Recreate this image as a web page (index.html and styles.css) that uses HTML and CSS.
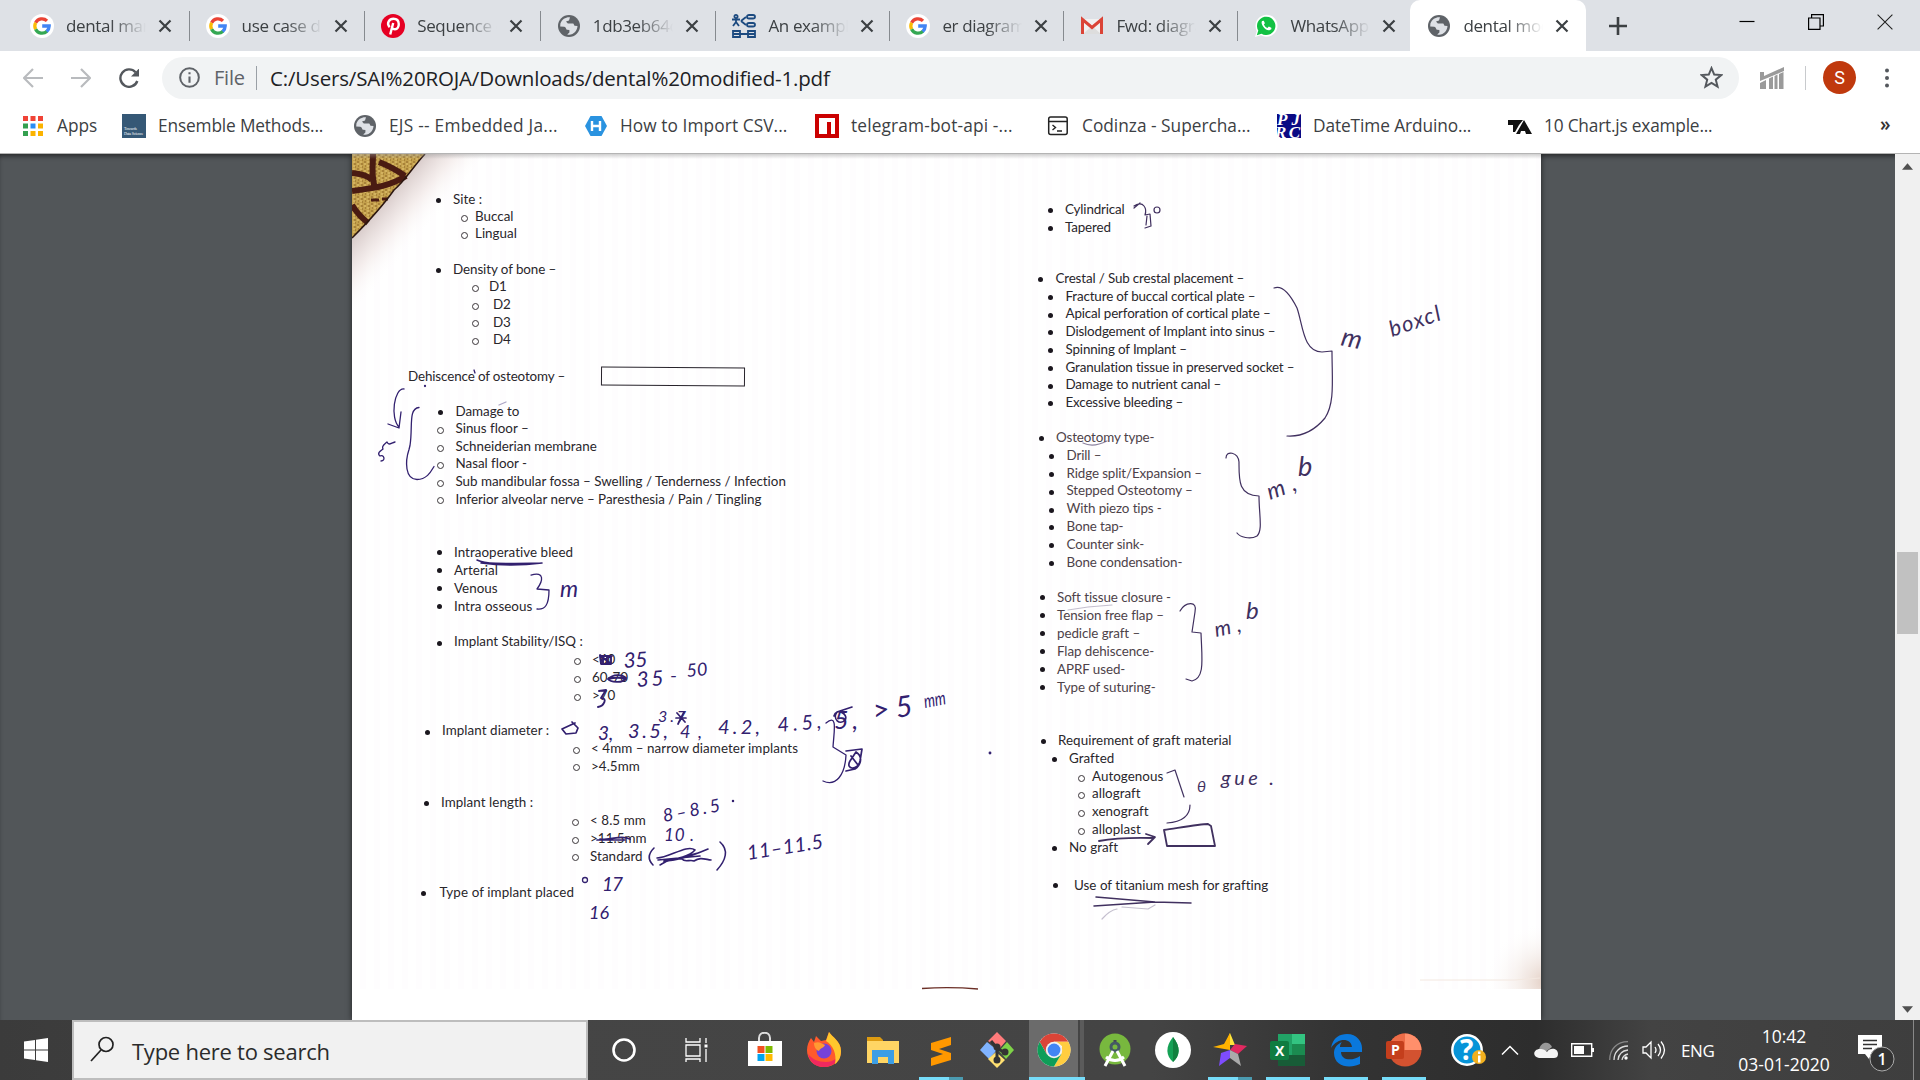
FILE: index.html
```html
<!DOCTYPE html>
<html lang="en">
<head>
<meta charset="utf-8">
<title>dental modified-1.pdf</title>
<link rel="stylesheet" href="styles.css">
</head>
<body>
<svg class="defs" width="0" height="0">
  <symbol id="google" viewBox="0 0 24 24"><circle cx="12" cy="12" r="12" fill="#fff"/><g fill="none" stroke-width="3.3"><path d="M5.6 8.8A7.2 7.2 0 0 1 17 6.9" stroke="#ea4335"/><path d="M5.6 15.2a7.2 7.2 0 0 1 0-6.4" stroke="#fbbc05"/><path d="M17 17.2A7.2 7.2 0 0 1 5.6 15.2" stroke="#34a853"/><path d="M12.2 12h7a7.2 7.2 0 0 1-2.5 5.4" stroke="#4285f4"/></g></symbol>
  <symbol id="globe" viewBox="0 0 24 24"><circle cx="12" cy="12" r="11" fill="#5f6368"/><path d="M13 3.2C9 2.8 5 5 3.4 9.5l-.2 3 4 .2c2 .2 1.6 3 3 3l2.2.2v2.6l-2.2 2c6 1.2 10-3.5 10.300-8.500l-3-.2-1.200-2.400h-5.500L9 7.500l3-1z" fill="#dee1e6"/></symbol>
  <symbol id="x" viewBox="0 0 14 14"><path d="M1.500 1.500l11 11m0-11l-11 11" stroke="#3c4043" stroke-width="2.200"/></symbol>
</svg>

<header class="tabs">
  <div class="tab"><svg class="fav"><use href="#google"/></svg><span class="title">dental man</span><svg class="close"><use href="#x"/></svg></div>
  <div class="tab"><svg class="fav"><use href="#google"/></svg><span class="title">use case dia</span><svg class="close"><use href="#x"/></svg></div>
  <div class="tab"><svg class="fav" viewBox="0 0 24 24"><circle cx="12" cy="12" r="12" fill="#e60023"/><path d="M9.200 20.500l3-11.500M8.600 13.200C5 9 8.500 4.800 12.500 4.800c7 0 6.500 10.500 1.500 10.500-2 0-2.700-1.300-2.700-1.300" fill="none" stroke="#fff" stroke-width="2.400"/></svg><span class="title">Sequence d</span><svg class="close"><use href="#x"/></svg></div>
  <div class="tab"><svg class="fav"><use href="#globe"/></svg><span class="title">1db3eb64c</span><svg class="close"><use href="#x"/></svg></div>
  <div class="tab"><svg class="fav" viewBox="0 0 24 24"><g fill="none" stroke="#1c4a80" stroke-width="1.800"><circle cx="4" cy="2.500" r="1.600"/><path d="M4 4v4M0 5.500h8M4 8l-3 4M4 8l3 4M9 7l5-4M9 7l5 4M8 20h8"/><rect x="15" y="1" width="8" height="3.500" rx="2"/><rect x="15" y="9" width="8" height="3.500" rx="2"/><path d="M1 17h7v6H1zM1 20h7M16 17h7v6h-7zM16 20h7"/></g></svg><span class="title">An example</span><svg class="close"><use href="#x"/></svg></div>
  <div class="tab"><svg class="fav"><use href="#google"/></svg><span class="title">er diagram</span><svg class="close"><use href="#x"/></svg></div>
  <div class="tab"><svg class="fav" viewBox="0 0 24 24"><path d="M3 5h18v15H3z" fill="#f1f1f1"/><path d="M3 20l9-8 9 8z" fill="#ddd"/><path d="M2.500 20V5.500L12 13.500l9.500-8V20" fill="none" stroke="#db4437" stroke-width="3"/></svg><span class="title">Fwd: diagra</span><svg class="close"><use href="#x"/></svg></div>
  <div class="tab nosep"><svg class="fav" viewBox="0 0 24 24"><path d="M1 23l1.800-6A11 11 0 1 1 7 21.300z" fill="#fff"/><path d="M2.800 21.200l1.500-4.600A9.200 9.200 0 1 1 7.500 19.800z" fill="#12c143"/><path d="M8 7c-2 3 3.500 10.500 8 9 1.500-.5 1.500-1.500 1.300-2.200l-2.500-1.200-1.300 1.400c-1.500-.5-3-2-3.600-3.500l1-1.300L9.800 6.800z" fill="#fff"/></svg><span class="title">WhatsApp</span><svg class="close"><use href="#x"/></svg></div>
  <div class="tab active"><svg class="fav"><use href="#globe"/></svg><span class="title">dental mod</span><svg class="close"><use href="#x"/></svg></div>
  <svg class="plus" viewBox="0 0 18 18"><path d="M9 0v18M0 9h18" stroke="#3c4043" stroke-width="2.600"/></svg>
  <div class="winbtns">
    <svg viewBox="0 0 16 16"><path d="M.5 7.500h15" stroke="#000" stroke-width="1.200"/></svg>
    <svg viewBox="0 0 16 16"><path d="M.6 4h11.400v11.400H.6zM3.600 4V.6h11.800V12H12" fill="none" stroke="#000" stroke-width="1.200"/></svg>
    <svg viewBox="0 0 16 16"><path d="M.6.6l14.800 14.800m0-14.800L.6 15.400" stroke="#222" stroke-width="1.100"/></svg>
  </div>
</header>

<nav class="toolbar">
  <svg class="nav" viewBox="0 0 20 20"><path d="M20 10H1M10 1L1 10l9 9" fill="none" stroke="#b9bbbe" stroke-width="2.200"/></svg>
  <svg class="nav" viewBox="0 0 20 20"><path d="M0 10h19M10 1l9 9-9 9" fill="none" stroke="#b9bbbe" stroke-width="2.200"/></svg>
  <svg class="nav" viewBox="0 0 20 20"><path d="M18.300 13A8.700 8.700 0 1 1 16.500 4.200" fill="none" stroke="#54585d" stroke-width="2.400"/><path d="M20.500 0v8.500H12z" fill="#54585d"/></svg>
  <div class="omni">
    <svg class="info" viewBox="0 0 20 20"><circle cx="10" cy="10" r="8.900" fill="none" stroke="#5f6368" stroke-width="1.900"/><path d="M9 9h2v6H9zM9 5h2v2H9z" fill="#5f6368"/></svg>
    <span class="file">File</span><span class="url">C:/Users/SAI%20ROJA/Downloads/dental%20modified-1.pdf</span>
    <svg class="star" viewBox="0 0 22 22"><path d="M11 2l2.600 6.200 6.700.5-5.200 4.400 1.700 6.600-5.800-3.600-5.800 3.600 1.700-6.600L1.700 8.700l6.700-.5z" fill="none" stroke="#54585d" stroke-width="1.900"/></svg>
  </div>
  <svg class="ext" viewBox="0 0 24 22"><path d="M0 5h4v4L24 0v4L0 14zM0 16l6-3v9H0zM9 11.500l4-2V22H9zM14.500 9l3-1.500V22h-3zM19 7l4.500-2v17H19z" fill="#9a9a9a"/></svg>
  <span class="vline"></span>
  <span class="avatar">S</span>
  <svg class="dots" viewBox="0 0 6 24"><g fill="#54585d"><circle cx="3" cy="3" r="2.400"/><circle cx="3" cy="12" r="2.400"/><circle cx="3" cy="21" r="2.400"/></g></svg>
</nav>

<nav class="bookmarks">
  <a class="bm b1"><svg viewBox="0 0 24 24"><g><path d="M2 2h5v5H2zM9.500 2h5v5h-5zM17 2h5v5h-5z" fill="#f04336"/><path d="M2 9.500h5v5H2zM2 17h5v5H2z" fill="#34a050"/><path d="M9.500 9.500h5v5h-5z" fill="#2a8df5"/><path d="M17 9.500h5v5h-5zM17 17h5v5h-5zM9.500 17h5v5h-5z" fill="#fbb300"/></g></svg><span>Apps</span></a>
  <a class="bm b2"><svg viewBox="0 0 24 24"><path d="M0 0h24v24H0z" fill="#355876"/><text x="2" y="16" font-size="4" font-family="Liberation Serif" fill="#fff">Towards</text><text x="2" y="21" font-size="4" font-family="Liberation Serif" fill="#fff">Data Science</text></svg><span>Ensemble Methods...</span></a>
  <a class="bm b3"><svg><use href="#globe"/></svg><span>EJS -- Embedded Ja...</span></a>
  <a class="bm b4"><svg viewBox="0 0 24 24"><path d="M6.500 2h11L23 12l-5.500 10h-11L1 12z" fill="#2a93e0"/><path d="M8 7v10M16 7v10M8 12h8" stroke="#fff" stroke-width="2.400"/></svg><span>How to Import CSV...</span></a>
  <a class="bm b5"><svg viewBox="0 0 24 24"><path d="M0 0h24v24H0z" fill="#cb0000"/><path d="M4 4h16v16h-4V8h-4v12H4z" fill="#fff"/></svg><span>telegram-bot-api -...</span></a>
  <a class="bm b6"><svg viewBox="0 0 24 24"><rect x="2.700" y="3" width="18.500" height="17.500" rx="2" fill="none" stroke="#222" stroke-width="1.500"/><path d="M3 7.500h18M6.500 11l3 2.500-3 2.500M11 17h5" fill="none" stroke="#222" stroke-width="1.400"/></svg><span>Codinza - Supercha...</span></a>
  <a class="bm b7"><svg viewBox="0 0 24 24"><path d="M0 0h24v24H0z" fill="#0a0a84"/><g fill="#fff" font-family="Liberation Serif" font-weight="bold" font-style="italic" font-size="17"><text x="0" y="11" textLength="23">PJ</text><text x="-2" y="23.500" textLength="25">RC</text></g></svg><span>DateTime Arduino...</span></a>
  <a class="bm b8"><svg viewBox="0 0 24 24"><path d="M0 6h15l-4 5-4 7H5v-7H0zM16 6l8 14h-6l-1-3h-4l-1 3H8z" fill="#111"/></svg><span>10 Chart.js example...</span></a>
  <b class="more">»</b>
</nav>

<main class="viewer">
  <article class="page">
    <svg class="art" viewBox="352 154 1189 835">
      <defs>
        <linearGradient id="fold" gradientUnits="userSpaceOnUse" x1="388" y1="194" x2="428" y2="228"><stop offset="0" stop-color="#c9b8b6" stop-opacity=".75"/><stop offset=".5" stop-color="#efe4e2" stop-opacity=".6"/><stop offset="1" stop-color="#fff" stop-opacity="0"/></linearGradient>
        <radialGradient id="stain" gradientUnits="userSpaceOnUse" cx="1545" cy="982" r="60"><stop offset="0" stop-color="#e3cfc4"/><stop offset="1" stop-color="#fff" stop-opacity="0"/></radialGradient>
        <pattern id="weave" width="7" height="7" patternUnits="userSpaceOnUse"><path d="M0 1h2M4 3h2M1 5h1M5 6h1" stroke="#8d6426"/><path d="M3 1h2M0 3h2M3 5h2" stroke="#e3c574"/></pattern>
      </defs>
      <path d="M425 154h60L352 330v-92z" fill="url(#fold)"/>
      <path d="M352 154h73C412 168 405 181 394 190 382 207 368 222 352 238z" fill="#c3a04c"/>
      <path d="M352 154h73C412 168 405 181 394 190 382 207 368 222 352 238z" fill="url(#weave)"/>
      <g fill="none" stroke="#4a1b12" stroke-width="6"><path d="M352 191C375 188 390 186 406 176M373 154c0 15-2 22 2 34M352 173q14 1 20 7M352 205q6 10 16 18M379 162q15 6 26 14"/><path d="M371 200h8M382 199h6" stroke-width="3"/></g>
      <path d="M425 154C412 168 405 181 394 190 382 207 368 222 352 238" fill="none" stroke="#2b1610" stroke-width="1.500"/>
      <path d="M1380 989l161-95v95z" fill="url(#stain)"/>
      <path d="M1420 980h95l25-2" fill="none" stroke="#f3e8e0"/>
    </svg>

    <section class="col left">
      <ul class="g site"><li>Site :</li><li class="o s1">Buccal</li><li class="o s1">Lingual</li></ul>
      <ul class="g density"><li>Density of bone –</li><li class="o s2">D1</li><li class="o s3">D2</li><li class="o s3">D3</li><li class="o s3">D4</li></ul>
      <div class="dehis"><span>Dehiscence of osteotomy –</span><i></i></div>
      <ul class="g damage"><li>Damage to</li><li class="o">Sinus floor –</li><li class="o">Schneiderian membrane</li><li class="o">Nasal floor -</li><li class="o">Sub mandibular fossa – Swelling / Tenderness / Infection</li><li class="o">Inferior alveolar nerve – Paresthesia / Pain / Tingling</li></ul>
      <ul class="g bleed"><li>Intraoperative bleed</li><li>Arterial</li><li>Venous</li><li>Intra osseous</li></ul>
      <ul class="g isq"><li>Implant Stability/ISQ :</li><li class="o s4">&lt;60</li><li class="o s4">60-70</li><li class="o s4">&gt;70</li></ul>
      <ul class="g diam"><li>Implant diameter :</li><li class="o s4">&lt; 4mm – narrow diameter implants</li><li class="o s4">&gt;4.5mm</li></ul>
      <ul class="g length"><li>Implant length :</li><li class="o s4">&lt; 8.5 mm</li><li class="o s4">&gt;11.5mm</li><li class="o s4">Standard</li></ul>
      <ul class="g type"><li>Type of implant placed</li></ul>
    </section>

    <section class="col right">
      <ul class="g shape"><li>Cylindrical</li><li>Tapered</li></ul>
      <ul class="g crestal"><li>Crestal / Sub crestal placement –</li><li class="sub">Fracture of buccal cortical plate –</li><li class="sub">Apical perforation of cortical plate –</li><li class="sub">Dislodgement of Implant into sinus –</li><li class="sub">Spinning of Implant –</li><li class="sub">Granulation tissue in preserved socket –</li><li class="sub">Damage to nutrient canal –</li><li class="sub">Excessive bleeding –</li></ul>
      <ul class="g osteo"><li>Osteotomy type-</li><li class="sub">Drill –</li><li class="sub">Ridge split/Expansion –</li><li class="sub">Stepped Osteotomy –</li><li class="sub">With piezo tips -</li><li class="sub">Bone tap-</li><li class="sub">Counter sink-</li><li class="sub">Bone condensation-</li></ul>
      <ul class="g soft"><li>Soft tissue closure -</li><li>Tension free flap –</li><li>pedicle graft –</li><li>Flap dehiscence-</li><li>APRF used-</li><li>Type of suturing-</li></ul>
      <ul class="g graft"><li>Requirement of graft material</li><li class="sub">Grafted</li><li class="o s5">Autogenous</li><li class="o s5">allograft</li><li class="o s5">xenograft</li><li class="o s5">alloplast</li><li class="sub">No graft</li></ul>
      <ul class="g mesh"><li>Use of titanium mesh for grafting</li></ul>
    </section>

    <svg class="ink" viewBox="352 154 1189 866">
      <g class="pen">
        <path d="M404 389C394 388 390 418 399 427M388 424l11 4 2-16M381 461c5 0 3-7-1-5-4-3 2-6 3-7-2-3 2-5 4-7 2 4 4 1 8 0" />
        <path d="M419 407.500c-11 1-6 20-9 38l-1 4c-4 12-4 30 8 30 10 0 14-8 17-13"/>
        <path d="M499 405l7-3" opacity=".4"/>
        <path d="M477 560c8 4 20 4 65 3M481 563q30 4 61 0" stroke-width="1.600"/>
        <path d="M531 575c14-4 12 6 6 14l12 1c0 15-4 20-12 19"/>
        <path d="M600 655l11 9m-10-3l11-5m-12 0h11v8h-10zm3 0v8m4-8v8M608 679c5-5 14-5 18-1-3 6-16 4-18 1 8-2 12-2 18 0M599 691l7-1-5 8c7 0 3 8-3 9" stroke-width="1.900"/>
        <path d="M575 723l-13 6 4 5 10-1 2-5-6-6M677 713l8 9m-9-4h10m-2-6l-6 12M834 716c2-9 15-2 11 4-5 6-13-1-8-8l15-5" stroke-width="1.700"/>
        <path d="M826 723c12-10 8 8 7 24l13 8c-1 20-10 32-23 26"/>
        <path d="M846 751l16-2-2 12c-2 10-15 9-10 0l6-9c8 5 4 14-1 17l-9 2M851 756l7 9" stroke-width="1.700"/>
        <path d="M600 839c12 2 20-5 30 0M597 840h28" stroke-width="1.700"/>
        <path d="M654 848q-9 9-1 17M657 858c12 0 30-14 38-8-6 7-20 9-31 11 14 0 30-6 44-12M658 860l42-4M664 862l34-9M660 865c8-4 10-8 22-6 3 4 8 0 12 2 6-4 10-2 17-1M720 842c9 8 6 18-3 28" stroke-width="1.600"/>
        <circle cx="585" cy="880" r="2.500"/><circle cx="733" cy="801" r=".6"/><circle cx="990" cy="753" r=".8"/><circle cx="425" cy="386" r=".5"/><path d="M474 370l1 3"/>
        <g class="hand">
          <text x="560" y="597" font-size="23">m</text>
          <text transform="translate(624 668) rotate(-4)" font-size="21" textLength="24">35</text><text transform="translate(637 687) rotate(-4)" font-size="21" textLength="27">35</text><text x="670" y="682" font-size="20">-</text><text transform="translate(687 677) rotate(-5)" font-size="18">50</text>
          <text x="598" y="740" font-size="19">3,</text><text x="628" y="738" font-size="20" textLength="40">3.5,</text><text x="658" y="722" font-size="16" textLength="28">3.7</text><text x="680" y="738" font-size="18" textLength="22">4,</text><text x="718" y="734" font-size="20" textLength="42">4.2,</text><text transform="translate(778 732) rotate(-5)" font-size="20" textLength="44">4.5,</text><text x="834" y="729" font-size="25" textLength="24">5,</text>
          <text transform="translate(874 721) rotate(-8)" font-size="29" textLength="40">&gt;5</text><text transform="translate(925 708) rotate(-10)" font-size="19" textLength="22" lengthAdjust="spacingAndGlyphs">mm</text>
          <text transform="translate(664 822) rotate(-11)" font-size="18" textLength="58">8–8.5</text><text x="664" y="841" font-size="17" textLength="30">10 .</text>
          <text transform="translate(748 860) rotate(-9)" font-size="20" textLength="77">11–11.5</text><text x="602" y="891" font-size="19" textLength="21">17</text><text x="589" y="919" font-size="18">16</text>
        </g>
      </g>
      <g class="pen soft-pen">
        <path d="M1134 206c10-6 13 3 11 9l5-1 1 12-6 2M1147 216l-1 9M1140 203l-6 5"/><circle cx="1157" cy="210" r="3"/>
        <path d="M1274 288c10-4 18 10 23 20 6 17 6 44 25 44l10-1c0 29 3 52-7 67-10 12-23 19-38 18"/>
        <path d="M1083 443q10 5 24-2" opacity=".6"/>
        <path d="M1226 458c0-8 12-6 13 4 0 18-1 33 20 34 0 19 4 34-2 40-7 4-17 1-20-3"/>
        <path d="M1180 611c5-9 18-11 15 1l-3 20 9 1c1 27 4 45-9 48l-6-2"/>
        <path d="M1068 610l20-3 24-2" opacity=".3"/>
        <path d="M1167 773l8-3 9 27M1190 805c0 13-10 17-23 18"/>
        <path d="M1099 841q21-4 55-3M1146 834l9 3-7 7M1164 830c14-2 36-6 44-6l3 2 4 20h-48z" stroke-width="1.800"/>
        <path d="M1096 897l59 5 36 1M1094 906l61-4" stroke-width="1.500"/>
        <path d="M1102 919q8-9 15-10M1122 907l26 2 7-4" opacity=".3"/>
        <g class="hand">
          <text transform="translate(1340 345) rotate(12)" font-size="26">m</text><text transform="translate(1392 337) rotate(-19)" font-size="22" textLength="53">boxcl</text>
          <text transform="translate(1270 500) rotate(-20)" font-size="23" textLength="30">m,</text><text x="1298" y="476" font-size="27">b</text>
          <text transform="translate(1216 637) rotate(-12)" font-size="21" textLength="27">m,</text><text x="1246" y="619" font-size="24">b</text>
          <text x="1197" y="792" font-size="16">θ</text><text x="1221" y="785" font-size="20" textLength="53">gue .</text>
        </g>
      </g>
      <path d="M922 988.500q28-2 56 .5" stroke="#6b2f27" stroke-width="1.300" fill="none"/>
    </svg>
  </article>
  <aside class="scroll"><svg viewBox="0 0 12 7"><path d="M0 7h12L6 0z" fill="#505050"/></svg><i></i><svg viewBox="0 0 12 7"><path d="M0 0h12L6 7z" fill="#505050"/></svg></aside>
</main>

<footer class="taskbar">
  <div class="start"><svg width="24" height="24" viewBox="0 0 24 24"><path d="M0 3.500l11-1.600v9.600H0zM12 1.700L24 0v11.500H12zM0 12.500h11v9.600L0 20.500zM12 12.500h12V24l-12-1.700z" fill="#fff"/></svg></div>
  <label class="search"><svg width="26" height="26" viewBox="0 0 26 26"><circle cx="17" cy="8.500" r="7" fill="none" stroke="#222" stroke-width="1.700"/><path d="M12 14L2 25" stroke="#222" stroke-width="1.700"/></svg><span>Type here to search</span></label>
  <div class="apps">
    <div class="app a1"><svg viewBox="0 0 36 36"><circle cx="18" cy="18" r="10.500" fill="none" stroke="#fff" stroke-width="2.600"/></svg></div>
    <div class="app a2"><svg viewBox="0 0 36 36"><g fill="none" stroke="#fff" stroke-width="1.300"><path d="M8 13h14v11H8zM8 6v4h14V6M8 30v-3h14v3M28 6v5M28 17v13"/><path d="M26.500 14h3" stroke-width="3"/></g></svg></div>
    <div class="app a3"><svg viewBox="0 0 36 36"><path d="M12 10V6c0-7 11-7 11 0v4" fill="none" stroke="#ddd" stroke-width="2"/><path d="M1 9h34v25H1z" fill="#fff"/><path d="M10.500 14h7v7h-7z" fill="#f25022"/><path d="M18.500 14h7v7h-7z" fill="#7fba00"/><path d="M10.500 22h7v7h-7z" fill="#00a4ef"/><path d="M18.500 22h7v7h-7z" fill="#ffb900"/></svg></div>
    <div class="app a4"><svg viewBox="0 0 36 36"><path d="M18 35C7 35 1 27 1 18 1 13 3 9 5 6l3 4 2-6 5 5 5-1 3-8c2 4 12 9 12 19 0 9-6 16-17 16z" fill="#ff5a2c"/><path d="M2 22c2 9 8 13 16 13 9 0 17-7 17-17-3 8-7 12-15 12S6 27 2 22z" fill="#f0295f"/><path d="M23 0c3 5 12 9 12 19 0 7-3 11-6 13 2-10-2-19-9-23z" fill="#ffc72d"/><circle cx="18" cy="19" r="7.500" fill="#7542d8"/><path d="M8 11c5-2 7 0 11 2-1 3-5 3-6 6-3-1-5-4-5-8z" fill="#ff9a32"/></svg></div>
    <div class="app a5"><svg viewBox="0 0 36 36"><path d="M2 5h13l3 3v6H2z" fill="#dd9b11"/><path d="M2 9h32v22H2z" fill="#ffd564"/><path d="M7 18h22v14h-6v-7H13v7H7z" fill="#3c9ee5"/></svg></div>
    <div class="app a6"><svg viewBox="0 0 36 36"><path d="M28 5v8l-12 4 12 4v7L8 34v-8l12-4-12-4v-7z" fill="#ff9800"/></svg></div>
    <div class="app a7"><svg viewBox="0 0 36 36"><path d="M18 0l9 9-6 7-3-2-9-5z" fill="#ff7b7b"/><path d="M8 10l10 8-8 9-9-9z" fill="#80b3ff"/><path d="M28 10l7 8-8 9-7-8z" fill="#7ed348"/><path d="M17 20l9 8-8 8-9-9z" fill="#ffe071"/><path d="M12 9l6 7v13M18 16l8 5" stroke="#333" stroke-width="3" fill="none"/><circle cx="18" cy="28" r="3.500" fill="#333"/><circle cx="26" cy="20" r="3.500" fill="#333"/><circle cx="18" cy="15" r="3.500" fill="#333"/></svg></div>
    <div class="app a8"><svg viewBox="0 0 36 36"><circle cx="18" cy="18" r="16.500" fill="#fff"/><path d="M3.700 9.750a16.500 16.500 0 0 1 28.600 0H18l-7.200 12.400z" fill="#db4437"/><path d="M32.300 9.750a16.500 16.500 0 0 1-14.300 24.750l7.200-12.400L26 14l-8-4.250z" fill="#ffcd40"/><path d="M3.700 9.750A16.500 16.500 0 0 0 18 34.500l7.200-12.300H10.800z" fill="#0f9d58"/><circle cx="18" cy="18" r="8.200" fill="#f1f1f1"/><circle cx="18" cy="18" r="6.400" fill="#4285f4"/></svg></div>
    <div class="app a9"><svg viewBox="0 0 36 36"><circle cx="18" cy="17" r="15.500" fill="#78b83e"/><path d="M16.500 8h3v4h-3z" fill="#445"/><circle cx="18" cy="15" r="4" fill="none" stroke="#455a64" stroke-width="3"/><path d="M16 19L8 34M20 19l8 15M9 25q9 7 18 0" stroke="#fff" stroke-width="3" fill="none"/></svg></div>
    <div class="app a10"><svg viewBox="0 0 36 36"><circle cx="18" cy="18" r="18" fill="#fff"/><path d="M18 5c8 10 7 19 0 25-7-6-8-15 0-25z" fill="#15a155"/><path d="M18 5c8 10 7 19 0 25z" fill="#12813f"/></svg></div>
    <div class="app a11"><svg viewBox="0 0 36 36"><path d="M18 1l5 12H13z" fill="#ffe43b"/><path d="M18 1v17L1 15l11-3z" fill="#ffb300"/><path d="M18 18l5-6 12 2-9 8z" fill="#e12960"/><path d="M18 18L9 21 7 34l11-8z" fill="#7e4cff"/><path d="M18 18v8l11 8-3-12z" fill="#aaa"/></svg></div>
    <div class="app a12"><svg viewBox="0 0 36 36"><path d="M8 2h27v32H8z" fill="#21a366"/><path d="M22 2h13v10H22z" fill="#33c481"/><path d="M8 23h27v11H8z" fill="#185c37"/><path d="M22 12h13v11H22z" fill="#1b8b50"/><rect y="9" width="19" height="19" rx="2" fill="#107c41"/><text x="5" y="23.500" font-size="14" font-weight="700" font-family="Open Sans" fill="#fff">X</text></svg></div>
    <div class="app a13"><svg viewBox="0 0 36 36"><path d="M3 16C5 5 12 2 19 2c10 0 15 8 15 14v4H13c0 9 12 9 19 4v8c-10 5-26 3-26-11 0-6 4-9 8-11-2 2-2 5-2 5h12C23 6 10 5 3 16z" fill="#0a78dc"/></svg></div>
    <div class="app a14"><svg viewBox="0 0 36 36"><circle cx="19" cy="18" r="16.500" fill="#d35230"/><path d="M19 1.500A16.500 16.500 0 0 1 35.500 18H19z" fill="#ff8f6b"/><path d="M2.500 18A16.500 16.500 0 0 1 19 1.500V18z" fill="#ed6c47"/><rect y="9" width="18" height="18" rx="2" fill="#c43e1c"/><text x="5" y="23" font-size="14" font-weight="700" font-family="Open Sans" fill="#fff">P</text></svg></div>
    <div class="app a15"><svg viewBox="0 0 36 36"><circle cx="16" cy="18" r="14.700" fill="#0794d8" stroke="#fff" stroke-width="2.400"/><text x="9" y="28" font-size="28" font-weight="700" font-family="Open Sans" fill="#fff">?</text><circle cx="28" cy="25" r="7" fill="#f2b01e"/><path d="M27 19.500h2.500v2.500H27zM27 23.500h2.500v7H27z" fill="#fff"/></svg></div>
  </div>
  <div class="tray">
    <svg class="t1" viewBox="0 0 18 10"><path d="M1 9.500l8-8 8 8" fill="none" stroke="#fff" stroke-width="1.500"/></svg>
    <svg class="t2" viewBox="0 0 24 16"><path d="M5 8C6 0 15-2 18 5l-8 6z" fill="#999"/><path d="M5 16c-7-1-6-9 1-9 4 0 5 1 7 3 3-5 11-4 11 2 0 3-2 4-4 4z" fill="#f4f4f4"/></svg>
    <svg class="t3" viewBox="0 0 23 14"><path d="M.7.7h20v12.600H.7z" fill="none" stroke="#fff" stroke-width="1.400"/><path d="M3 3h10v8H3zM21 5h2v4h-2z" fill="#fff"/></svg>
    <svg class="t4" viewBox="0 0 20 19"><g fill="none" stroke-width="1.300"><path d="M.7 19C.7 8 8 .7 19 .7" stroke="#888"/><path d="M5 19C5 11 11 5 19 5M9 19q1-9 10-10M13 19q1-5 6-6" stroke="#ddd"/></g><circle cx="17" cy="17" r="1.700" fill="#fff"/></svg>
    <svg class="t5" viewBox="0 0 24 20"><g fill="none" stroke="#fff" stroke-width="1.300"><path d="M1 7h3l5-5v16l-5-5H1zM13 7q2 3 0 6M16 4q5 6 0 12M19 1.500q7 8.500 0 17"/></g></svg>
    <span class="lang">ENG</span>
    <span class="clock"><span>10:42</span><span>03-01-2020</span></span>
    <svg class="t6" viewBox="0 0 38 38"><path d="M1 1h24v19H14l-2 5-4-5H1z" fill="#fff"/><path d="M6 6.500h14M6 10.500h14M6 14.500h9" stroke="#333" stroke-width="1.300"/><circle cx="25" cy="25" r="12" fill="#333" stroke="#aaa"/><text x="20.500" y="31" fill="#fff" font-size="16" font-weight="600" font-family="Open Sans">1</text></svg>
    <i class="desk"></i>
  </div>
</footer>
</body>
</html>
```
FILE: styles.css
```css
* { box-sizing: border-box; }
body { margin: 0; width: 1920px; height: 1080px; overflow: hidden; display: flex; flex-direction: column; font-family: "Open Sans", "Noto Sans", sans-serif; color: #3c4043; }
.defs { position: absolute; }
svg { flex: none; }

/* tab strip */
.tabs { height: 51px; background: #dee1e6; display: flex; align-items: center; padding-left: 13px; flex: none; }
.tab { width: 174px; height: 51px; flex: none; display: flex; align-items: center; padding-left: 17px; position: relative; }
.tab:nth-child(-n+4) { width: 175.600px; }
.tab::after { content: ""; position: absolute; right: -1px; top: 11px; width: 1px; height: 30px; background: #868a8f; }
.tab.nosep::after, .tab.active::after { display: none; }
.tab.active { background: #fff; border-radius: 10px 10px 0 0; margin-left: -1px; width: 176px; }
.fav { width: 24px; height: 24px; }
.title { width: 80px; margin-left: 12px; overflow: hidden; white-space: nowrap; font-size: 17px; letter-spacing: -.35px; -webkit-mask-image: linear-gradient(90deg, #000 55%, transparent); mask-image: linear-gradient(90deg, #000 55%, transparent); }
.close { width: 14px; height: 14px; margin-left: 12px; }
.plus { width: 18px; height: 18px; margin-left: 23px; }
.winbtns { display: flex; gap: 53px; margin: -8px 27px 0 auto; }
.winbtns svg { width: 16px; height: 16px; }

/* toolbar */
.toolbar { height: 53px; background: #fff; display: flex; align-items: center; padding-left: 23px; flex: none; }
.nav { width: 20px; height: 20px; margin-right: 28px; }
.nav:nth-child(3) { margin-right: 23px; }
.omni { width: 1577px; height: 42px; border-radius: 21px; background: #f1f3f4; display: flex; align-items: center; padding-left: 17px; font-size: 20px; }
.info { width: 21px; height: 21px; }
.file { margin-left: 14px; width: 43px; height: 24px; line-height: 23px; border-right: 1px solid #9aa0a6; color: #5f6368; letter-spacing: -.2px; }
.url { margin-left: 13px; color: #202124; font-size: 20.500px; letter-spacing: -.17px; }
.star { width: 23px; height: 23px; margin: 0 16px 0 auto; }
.ext { width: 24px; height: 22px; margin-left: 21px; }
.vline { width: 1px; height: 24px; background: #c8cacd; margin-left: 21px; }
.avatar { width: 33px; height: 33px; border-radius: 50%; background: #c0390d; color: #fff; font: 18px/33px Roboto, sans-serif; text-align: center; margin-left: 17px; }
.dots { width: 6px; height: 20px; margin-left: 28px; }

/* bookmarks */
.bookmarks { height: 50px; background: #fff; border-bottom: 1px solid #b4b4b4; display: flex; align-items: center; padding: 0 0 6px 21px; flex: none; font-size: 17.300px; white-space: nowrap; }
.bm { display: flex; align-items: center; gap: 12px; flex: none; }
.bm svg { width: 24px; height: 24px; }
.b1 { width: 101px; } .b2 { width: 231px; letter-spacing: -.15px; } .b3 { width: 231px; letter-spacing: .25px; } .b4 { width: 231px; letter-spacing: .08px; }
.b5 { width: 231px; letter-spacing: .15px; } .b6 { width: 231px; } .b7 { width: 231px; letter-spacing: -.1px; } .b8 { width: 220px; letter-spacing: -.2px; }
.more { margin: -4px 0 0 152px; font-size: 19px; font-weight: 600; color: #333; }

/* pdf viewer */
.viewer { height: 866px; background: #525659; display: flex; flex: none; padding-left: 352px; box-shadow: inset 0 4px 5px -2px #0008; }
.page { position: relative; width: 1189px; height: 866px; display: flex; font: 13.400px Lato, "Open Sans", sans-serif; color: #29262b; box-shadow: 0 0 6px #0009; background: repeating-linear-gradient(90deg, #fff 0 8px, #fefdfe 8px 14px) 0 0 / 100% 835px no-repeat, #fff; clip-path: inset(0 -8px); }
.page::after { content: ""; position: absolute; inset: 0 0 auto; height: 5px; background: linear-gradient(#9997, transparent); }
.art, .ink { position: absolute; left: 0; top: 0; width: 1189px; }
.art { height: 835px; } .ink { height: 866px; }
.col { position: relative; flex: none; display: flex; flex-direction: column; white-space: nowrap; }
.left { width: 648px; }
.right { width: 541px; }
.g { list-style: none; margin: 0; padding: 0; --b: 86px; --gap: 15px; line-height: var(--lh); }
.g li { display: flex; align-items: center; height: var(--lh); }
.g li::before { content: ""; box-sizing: border-box; flex: none; width: 5px; height: 5px; border-radius: 50%; background: #1b171e; margin: 2px calc(var(--gap) - 2.500px) 0 calc(var(--b) - 2.500px); }
.g li.o::before { width: 7px; height: 7px; border: 1px solid #3a3539; background: none; margin: 3px calc(var(--gap) - 3.500px) 0 calc(var(--b) - 3.500px); }
.site { --lh: 17.200px; margin-top: 37px; }
.g .s1 { --b: 112px; --gap: 11px; }
.density { --lh: 17.600px; margin-top: 18.200px; letter-spacing: -.08px; }
.g .s2 { --b: 123px; --gap: 14px; }
.g .s3 { --b: 123px; --gap: 18px; }
.dehis { height: 18px; line-height: 18px; margin-top: 18.200px; padding-left: 56px; display: flex; letter-spacing: -.12px; }
.dehis span { width: 193px; }
.dehis i { width: 144px; height: 19px; border: 1.500px solid #28242c; transform: rotate(.4deg); }
.g.damage { --lh: 17.600px; margin-top: 17.700px; --b: 88.500px; letter-spacing: -.02px; }
.g.bleed { --lh: 18px; margin-top: 34.700px; --b: 87px; letter-spacing: .04px; }
.g.isq { --lh: 17.900px; margin-top: 18.500px; --b: 87px; }
.g .s4 { --b: 225px; }
.g.diam { --lh: 17.600px; margin-top: 17.500px; --b: 75px; letter-spacing: .06px; }
.g.diam .s4 { --b: 224px; }
.g.length { --lh: 17.900px; margin-top: 18.700px; --b: 74px; letter-spacing: .06px; }
.g.length .s4 { --b: 223px; }
.g.type { --lh: 18px; margin-top: 17.900px; --b: 71px; --gap: 16.500px; letter-spacing: .1px; }
.g.shape { --lh: 17.800px; margin-top: 47.100px; --b: 50px; letter-spacing: -.15px; }
.g.crestal { --lh: 17.750px; margin-top: 33.100px; --b: 40.500px; letter-spacing: -.15px; }
.crestal .sub { --b: 50.500px; }
.g.osteo { --lh: 17.800px; margin-top: 17.300px; --b: 41px; letter-spacing: -.12px; }
.osteo .sub { --b: 51.500px; }
.g.soft { --lh: 18px; margin-top: 16.500px; --b: 42px; letter-spacing: -.08px; }
.osteo, .soft { color: #4d4249; }
.g.graft { --lh: 17.800px; margin-top: 36.100px; --b: 43px; letter-spacing: .04px; }
.graft .sub { --b: 54px; }
.g .s5 { --b: 81px; --gap: 11px; }
.g.mesh { --lh: 18px; margin-top: 19px; --b: 55px; --gap: 19px; letter-spacing: .02px; }
.pen { fill: none; stroke: #32206f; stroke-width: 1.300; stroke-linecap: round; stroke-linejoin: round; }
.soft-pen { stroke: #40305f; stroke-width: 1.200; }
.hand { stroke: none; fill: #32206f; font-family: Lato, sans-serif; font-style: italic; font-weight: 400; }
.soft-pen .hand { fill: #40305f; }
.scroll { margin-left: 354px; width: 25px; background: #f0f0f0; display: flex; flex-direction: column; align-items: center; padding: 9px 0 7px; }
.scroll svg { width: 11px; height: 7px; }
.scroll i { width: 21px; height: 82px; background: #c1c1c1; margin: 382px 0 auto; }

/* taskbar */
.taskbar { height: 60px; background: linear-gradient(90deg, #3b3b3b 0, #454545 25%, #444 60%, #333 70%, #2d2d2d 80%, #434343 86%, #3e3e3e); display: flex; flex: none; color: #fff; }
.start { width: 72px; display: flex; align-items: center; justify-content: center; }
.search { width: 516px; height: 60px; background: #f1f1f1; border: 2px solid #bdbdbd; display: flex; align-items: center; padding-left: 15px; color: #2b2b2b; font-size: 22px; letter-spacing: -.25px; white-space: nowrap; }
.search svg { margin-top: -2px; margin-right: 17px; }
.search span { margin-top: 1px; }
.apps { display: flex; width: 908px; }
.app { height: 60px; width: 58px; flex: none; display: flex; align-items: center; justify-content: center; position: relative; }
.app svg { width: 36px; height: 36px; }
.a1 { width: 72px; } .a2 { width: 71px; } .a3 { width: 68px; } .a4 { width: 50px; } .a5 { width: 67px; }
.a6 { width: 48px; margin-left: 1px; } .a7 { width: 64px; } .a8 { width: 49px; background: #6b6b6b; }
.a9 { width: 62px; margin-left: 6px; } .a10 { width: 54px; } .a11 { width: 59px; }
.a15 { width: 71px; }
.a6::after, .a8::after, .a11::after, .a12::after, .a13::after, .a14::after { content: ""; position: absolute; bottom: 0; height: 3px; width: 44px; background: #76dcf9; }
.a6::after, .a11::after { background: linear-gradient(90deg, #76dcf9 68%, #4b9bb0 68%); }
.a8::after { width: 56px; left: 0; }
.a8::before { content: ""; position: absolute; left: 51px; width: 4px; height: 60px; background: #5b5b5b; }
.tray { display: flex; align-items: center; flex: 1; font-size: 17px; white-space: nowrap; }
.t1 { width: 18px; height: 10px; margin-left: 5px; }
.t2 { width: 24px; height: 16px; margin-left: 15px; }
.t3 { width: 23px; height: 14px; margin-left: 13px; }
.t4 { width: 20px; height: 19px; margin-left: 15px; }
.t5 { width: 24px; height: 20px; margin-left: 13px; }
.lang { margin-left: 15px; width: 36px; letter-spacing: -.4px; }
.clock { margin-left: 12px; width: 110px; display: flex; flex-direction: column; text-align: center; font-size: 17.500px; line-height: 28px; }
.t6 { width: 38px; height: 38px; margin: 6px 0 0 18px; }
.desk { width: 1px; height: 60px; background: #888; margin-left: auto; margin-right: 6px; }
```
